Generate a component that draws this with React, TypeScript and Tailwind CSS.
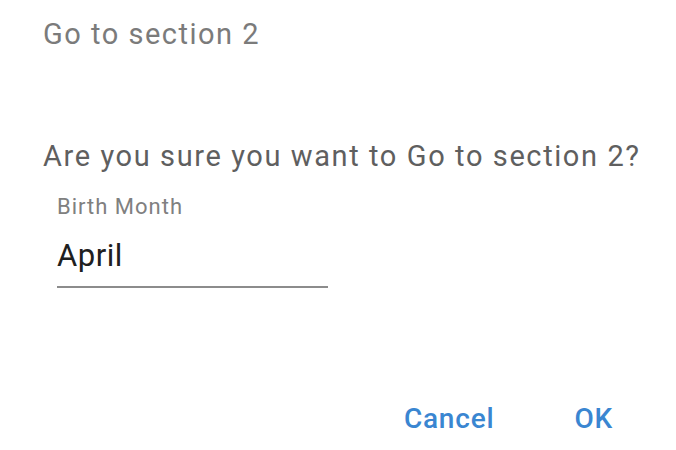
const App: React.FC = () => {
  return (
    <div className="w-[676px] h-[450px] bg-white overflow-hidden font-['Roboto',sans-serif] flex flex-col">
      <header className="pl-[43px] pt-[16px] h-[100px]">
        <h2 className="text-[29px] leading-[36px] tracking-[1.5px] text-[#7b7b7b] font-normal">Go to section 2</h2>
      </header>
      <div className="pl-[43px] pt-[36px]">
        <p className="text-[29px] leading-[40px] tracking-[1.6px] text-[#5f5f5f]">Are you sure you want to Go to section 2?</p>
        <div className="pl-[14px] pt-[18px] w-[285px]">
          <label className="block text-[22px] leading-[26px] tracking-[1px] text-[#808080]">Birth Month</label>
          <div className="text-[31px] leading-[40px] tracking-[0.5px] text-[#202020] pt-[16px] pb-[10px] border-b-2 border-[#8c8c8c]">April</div>
        </div>
      </div>
      <footer className="mt-auto flex justify-end items-center gap-[80px] pr-[63px] pb-[10px]">
        <button className="text-[28px] font-medium tracking-[0.8px] text-[#3a86d1]">Cancel</button>
        <button className="text-[28px] font-medium tracking-[0.8px] text-[#3a86d1]">OK</button>
      </footer>
    </div>
  );
};

export default App;
